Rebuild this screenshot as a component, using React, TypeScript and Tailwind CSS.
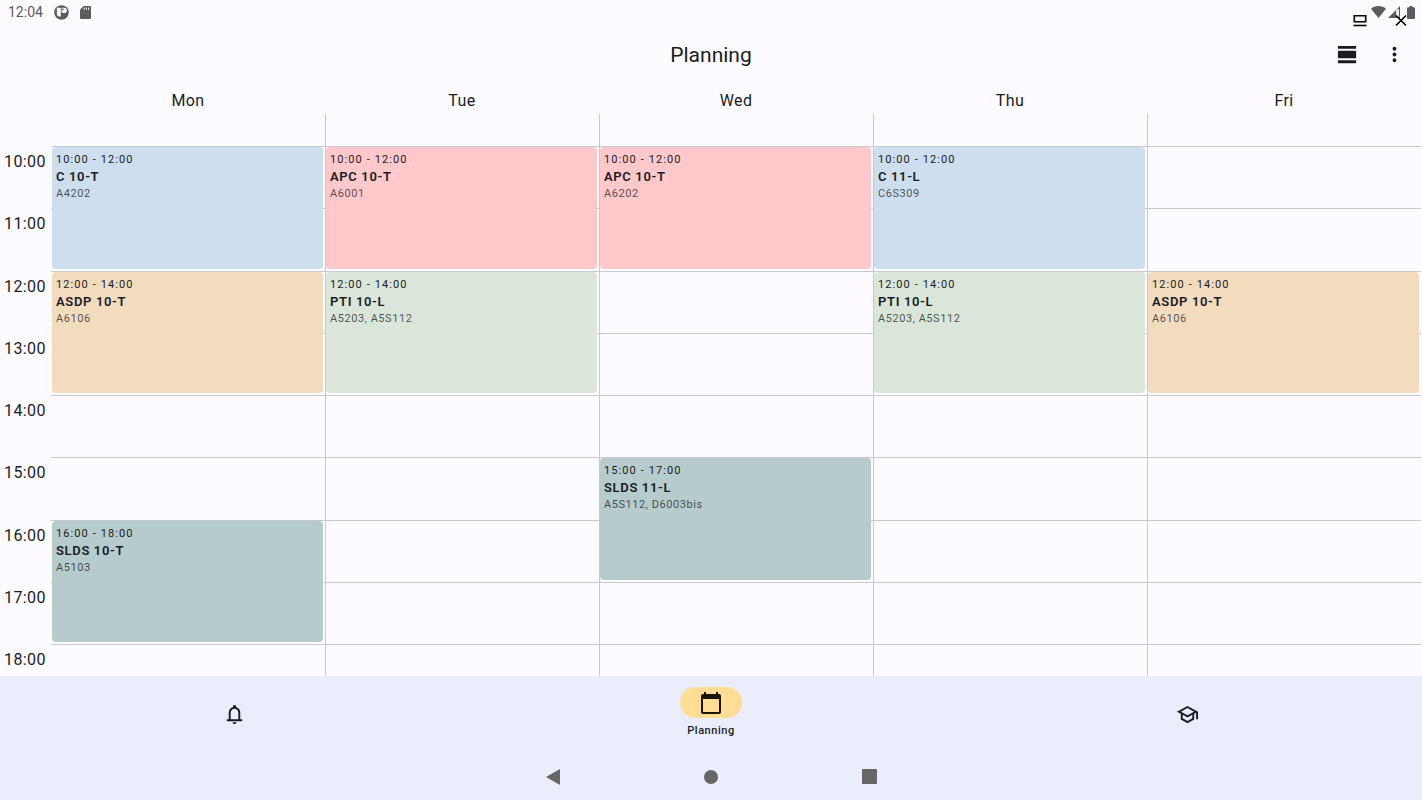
import {
  MdCalendarToday,
  MdMoreVert,
  MdOutlineSchool,
  MdViewDay,
} from 'react-icons/md'

interface CourseEventInterface {
  time: string,
  title: string,
  rooms: string,
  place: string,
  color: string
}

const days = [
  { name: 'Mon', col: 'col-start-2', line: '' },
  { name: 'Tue', col: 'col-start-3', line: 'border-l' },
  { name: 'Wed', col: 'col-start-4', line: 'border-l' },
  { name: 'Thu', col: 'col-start-5', line: 'border-l' },
  { name: 'Fri', col: 'col-start-6', line: 'border-l' },
]

const hours = [
  { label: '10:00', row: 'row-start-2' },
  { label: '11:00', row: 'row-start-3' },
  { label: '12:00', row: 'row-start-4' },
  { label: '13:00', row: 'row-start-5' },
  { label: '14:00', row: 'row-start-6' },
  { label: '15:00', row: 'row-start-7' },
  { label: '16:00', row: 'row-start-8' },
  { label: '17:00', row: 'row-start-9' },
  { label: '18:00', row: 'row-start-10' },
]

const blue = 'bg-[#cddeee]'
const pink = 'bg-[#ffc8cb]'
const orange = 'bg-[#f3dcbe]'
const green = 'bg-[#dae6da]'
const teal = 'bg-[#b5cbcc]'

const events: CourseEventInterface[] = [
  { time: '10:00 - 12:00', title: 'C 10-T', rooms: 'A4202', place: 'col-start-2 row-start-2', color: blue },
  { time: '12:00 - 14:00', title: 'ASDP 10-T', rooms: 'A6106', place: 'col-start-2 row-start-4', color: orange },
  { time: '16:00 - 18:00', title: 'SLDS 10-T', rooms: 'A5103', place: 'col-start-2 row-start-8', color: teal },
  { time: '10:00 - 12:00', title: 'APC 10-T', rooms: 'A6001', place: 'col-start-3 row-start-2', color: pink },
  { time: '12:00 - 14:00', title: 'PTI 10-L', rooms: 'A5203, A5S112', place: 'col-start-3 row-start-4', color: green },
  { time: '10:00 - 12:00', title: 'APC 10-T', rooms: 'A6202', place: 'col-start-4 row-start-2', color: pink },
  { time: '15:00 - 17:00', title: 'SLDS 11-L', rooms: 'A5S112, D6003bis', place: 'col-start-4 row-start-7', color: teal },
  { time: '10:00 - 12:00', title: 'C 11-L', rooms: 'C6S309', place: 'col-start-5 row-start-2', color: blue },
  { time: '12:00 - 14:00', title: 'PTI 10-L', rooms: 'A5203, A5S112', place: 'col-start-5 row-start-4', color: green },
  { time: '12:00 - 14:00', title: 'ASDP 10-T', rooms: 'A6106', place: 'col-start-6 row-start-4', color: orange },
]

const StatusBar = () => {
  return (
    <div className="relative flex h-6 items-center justify-between pl-2 pr-[7px] text-[#5c5c5e]">
      <div className="flex items-center">
        <span className="text-sm">12:04</span>
        <svg className="ml-[11px] h-[15px] w-[15px]" viewBox="0 0 15 15">
          <circle cx="7.5" cy="7.5" r="7.3" fill="currentColor" />
          <path d="M2.9 2.8h3.9v8.8H4.6L2.9 9.9z" fill="#fdfbff" />
          <path d="M7.6 2.8h2.600a2.600 2.600 0 0 1 0 5.200H9a1.400 1.400 0 0 1-1.400-1.400z" fill="#fdfbff" />
          <circle cx="8.800" cy="4.400" r=".9" fill="currentColor" />
        </svg>
        <svg className="ml-[11px] h-[13px] w-[11px]" viewBox="0 0 11 13">
          <path d="M3.6 0H10a1 1 0 0 1 1 1v11a1 1 0 0 1-1 1H1a1 1 0 0 1-1-1V3.8z" fill="currentColor" />
          <path d="M3.7 1.4h1v2.4h-1zM5.9 1.4h1v2.4h-1zM8.1 1.4h1v2.4h-1z" fill="#fdfbff" />
        </svg>
      </div>
      <div className="flex items-center">
        <svg className="h-3 w-[15px]" viewBox="0 0 15 12">
          <path d="M7.5 12 0 2.8C2 1 4.6 0 7.5 0S13 1 15 2.8z" fill="currentColor" />
        </svg>
        <svg className="ml-[2px] h-3 w-3" viewBox="0 0 12 12">
          <path d="M12 0v12H0zM10.9 3.2H8.2v7.7h2.7z" fill="currentColor" fillRule="evenodd" />
        </svg>
        <svg className="ml-[7px] h-[13px] w-2" viewBox="0 0 8 13">
          <path d="M2.5 0h3v1.3H7a1 1 0 0 1 1 1V12a1 1 0 0 1-1 1H1a1 1 0 0 1-1-1V2.3a1 1 0 0 1 1-1h1.5z" fill="currentColor" />
        </svg>
      </div>

      {/* window controls lie over the status icons */}
      <div className="absolute right-[15px] top-[14px] flex gap-[28px] text-black">
        <button aria-label="Minimize">
          <svg className="h-[13px] w-[14px]" viewBox="0 0 14 13">
            <path d="M1.3 1.8h11.4v6H1.3z" fill="none" stroke="currentColor" strokeWidth="1.6" />
            <path d="M.5 11.5h13" stroke="currentColor" strokeWidth="1.6" />
          </svg>
        </button>
        <button aria-label="Close">
          <svg className="h-[13px] w-3" viewBox="0 0 12 13">
            <path d="m1 1.5 10 10m0-10-10 10" stroke="currentColor" strokeWidth="1.7" />
          </svg>
        </button>
      </div>
    </div>
  )
}

const BellIcon = () => {
  return (
    <svg className="h-[23px] w-[23px]" viewBox="0 0 24 24" fill="currentColor">
      <path d="M4 19v-2h2v-7q0-2.075 1.25-3.688Q8.5 4.7 10.5 4.2v-.7q0-.625.438-1.063Q11.375 2 12 2t1.063.438Q13.5 2.875 13.5 3.5v.7q2 .5 3.25 2.113Q18 7.925 18 10v7h2v2Zm8 3q-.825 0-1.412-.587Q10 20.825 10 20h4q0 .825-.587 1.413Q12.825 22 12 22Zm-4-5h8v-7q0-1.65-1.175-2.825Q13.65 6 12 6q-1.65 0-2.825 1.175Q8 8.35 8 10Z" />
    </svg>
  )
}

const CourseEvent = ({ time, title, rooms, place, color }: CourseEventInterface) => {
  return (
    <article className={`${place} ${color} row-span-2 mb-[2px] ml-px mr-[2px] mt-px flex flex-col rounded-[4px] pl-1 pt-1`}>
      <p className="text-[11px] leading-[17px] tracking-widest">{time}</p>
      <h3 className="text-[13px] font-semibold leading-[17px] tracking-wider">{title}</h3>
      <p className="text-[11px] leading-[18px] tracking-wider text-[#1a1b1f]/75">{rooms}</p>
    </article>
  )
}

const WeekView = () => {
  return (
    <main className="flex flex-1 flex-col pr-px">
      <div className="grid h-[27px] grid-cols-[51px_repeat(5,1fr)] items-center text-center tracking-wide">
        {days.map((day) => (
          <h2 key={day.name} className={day.col}>{day.name}</h2>
        ))}
      </div>
      <div className="grid flex-1 grid-cols-[51px_repeat(5,1fr)] grid-rows-[32px_repeat(8,minmax(62px,1fr))_32px]">
        {days.map((day) => (
          <div key={day.name} className={`${day.col} ${day.line} row-start-1 border-[#c8c8d0]`}></div>
        ))}
        {hours.map((hour) => (
          <span key={hour.label} className={`${hour.row} col-start-1 pl-1 pt-1 tracking-wide`}>{hour.label}</span>
        ))}
        {hours.map((hour) => days.map((day) => (
          <div key={hour.label + day.name} className={`${day.col} ${hour.row} ${day.line} border-t border-[#c8c8d0]`}></div>
        )))}
        {events.map((event) => (
          <CourseEvent key={event.place} {...event} />
        ))}
      </div>
    </main>
  )
}

export default function App() {
  return (
    <div className="flex min-h-screen flex-col bg-[#fdfbff] font-[Roboto,sans-serif] text-[#1a1b1f]">
      <StatusBar />

      <header className="grid h-[63px] grid-cols-[1fr_auto_1fr] items-center">
        <h1 className="col-start-2 text-[21px]">Planning</h1>
        <div className="flex justify-end gap-6 pb-[2px] pr-4">
          <button aria-label="Change view"><MdViewDay className="h-[23px] w-[23px]" /></button>
          <button aria-label="More options"><MdMoreVert className="h-[23px] w-[23px]" /></button>
        </div>
      </header>

      <WeekView />

      <footer className="bg-[#e9edfc]">
        <nav className="grid h-[77px] grid-cols-3 gap-2">
          <button className="flex items-center justify-center" aria-label="Notifications">
            <BellIcon />
          </button>
          <button className="flex flex-col items-center pt-[11px]">
            <span className="flex h-[31px] w-[62px] items-center justify-center rounded-full bg-[#ffdd95] text-[#1a1400]">
              <MdCalendarToday className="h-6 w-6" />
            </span>
            <span className="mt-1 text-[11px] font-medium leading-[17px] tracking-wider">Planning</span>
          </button>
          <button className="flex items-center justify-center" aria-label="Courses">
            <MdOutlineSchool className="h-[23px] w-[23px]" />
          </button>
        </nav>

        {/* system buttons */}
        <div className="mx-auto grid h-[47px] w-1/3 grid-cols-3 text-[#666666]">
          <button className="flex items-center justify-center" aria-label="Back">
            <svg className="h-4 w-[14px]" viewBox="0 0 14 16">
              <path d="M14 0v16L0 8z" fill="currentColor" />
            </svg>
          </button>
          <button className="flex items-center justify-center" aria-label="Home">
            <span className="h-[14px] w-[14px] rounded-full bg-current"></span>
          </button>
          <button className="flex items-center justify-center" aria-label="Recent apps">
            <span className="h-[15px] w-[15px] rounded-[1px] bg-current"></span>
          </button>
        </div>
      </footer>
    </div>
  )
}
